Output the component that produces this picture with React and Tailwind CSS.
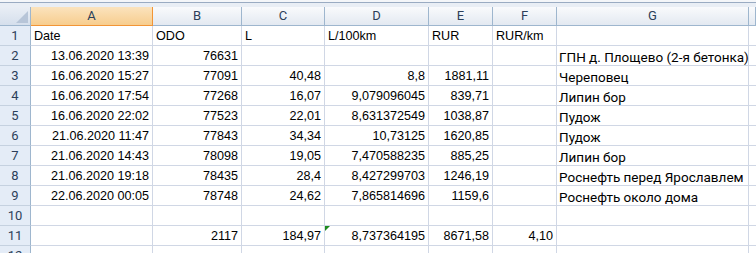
import React from "react";

const COLS = [
  { w: "w-[122px]", letter: "A" },
  { w: "w-[89px]", letter: "B" },
  { w: "w-[83px]", letter: "C" },
  { w: "w-[104px]", letter: "D" },
  { w: "w-[64px]", letter: "E" },
  { w: "w-[64px]", letter: "F" },
  { w: "w-[192px]", letter: "G" },
  { w: "flex-1", letter: "" },
];

const ROWS = [
  [["Date", "l"], ["ODO", "l"], ["L", "l"], ["L/100km", "l"], ["RUR", "l"], ["RUR/km", "l"], ["", "l"]],
  [["13.06.2020 13:39", "r"], ["76631", "r"], ["", "r"], ["", "r"], ["", "r"], ["", "r"], ["ГПН д. Площево (2-я бетонка)", "g"]],
  [["16.06.2020 15:27", "r"], ["77091", "r"], ["40,48", "r"], ["8,8", "r"], ["1881,11", "r"], ["", "r"], ["Череповец", "g"]],
  [["16.06.2020 17:54", "r"], ["77268", "r"], ["16,07", "r"], ["9,079096045", "r"], ["839,71", "r"], ["", "r"], ["Липин бор", "g"]],
  [["16.06.2020 22:02", "r"], ["77523", "r"], ["22,01", "r"], ["8,631372549", "r"], ["1038,87", "r"], ["", "r"], ["Пудож", "g"]],
  [["21.06.2020 11:47", "r"], ["77843", "r"], ["34,34", "r"], ["10,73125", "r"], ["1620,85", "r"], ["", "r"], ["Пудож", "g"]],
  [["21.06.2020 14:43", "r"], ["78098", "r"], ["19,05", "r"], ["7,470588235", "r"], ["885,25", "r"], ["", "r"], ["Липин бор", "g"]],
  [["21.06.2020 19:18", "r"], ["78435", "r"], ["28,4", "r"], ["8,427299703", "r"], ["1246,19", "r"], ["", "r"], ["Роснефть перед Ярославлем", "g"]],
  [["22.06.2020 00:05", "r"], ["78748", "r"], ["24,62", "r"], ["7,865814696", "r"], ["1159,6", "r"], ["", "r"], ["Роснефть около дома", "g"]],
  [["", "r"], ["", "r"], ["", "r"], ["", "r"], ["", "r"], ["", "r"], ["", "g"]],
  [["", "r"], ["2117", "r"], ["184,97", "r"], ["8,737364195", "r", true], ["8671,58", "r"], ["4,10", "r"], ["", "g"]],
  [["", "r"], ["", "r"], ["", "r"], ["", "r"], ["", "r"], ["", "r"], ["", "g"]],
];

function Cell({ w, text, kind, flag }) {
  const base =
    "relative shrink-0 h-full border-r border-b border-[#d0d7e5] flex items-end overflow-visible whitespace-nowrap text-black";
  if (kind === "g") {
    return (
      <div className={`${base} ${w} px-[2px] pb-[1px] font-['Roboto',sans-serif] text-[13.5px] leading-none`}>
        {text}
      </div>
    );
  }
  return (
    <div
      className={`${base} ${w} px-[3px] pb-[2px] font-['Liberation_Sans',Arial,sans-serif] text-[12.6px] leading-none ${
        kind === "r" ? "justify-end" : "justify-start"
      }`}
    >
      {flag && (
        <span className="absolute left-0 top-0 w-0 h-0 border-t-[5px] border-r-[5px] border-t-[#1e8a1e] border-r-transparent" />
      )}
      {text}
    </div>
  );
}

export default function App() {
  return (
    <div className="w-[756px] h-[253px] overflow-hidden bg-white relative">
      {/* top strip (formula bar bottom) */}
      <div className="h-[2px] bg-[#f4f6f9]" />
      <div className="h-[1px] bg-[#9aabc2]" />
      <div className="h-[4px] bg-[#e9eef5]" />

      {/* column headers */}
      <div className="flex h-[19px] font-['Roboto',sans-serif] text-[13px]">
        <div className="w-[31px] shrink-0 h-full border-r border-b border-[#9eb6ce] bg-gradient-to-b from-[#e9eef5] to-[#d5dfec] relative">
          <span className="absolute right-[2px] bottom-[2px] w-0 h-0 border-b-[12px] border-l-[12px] border-b-[#b7c5d8] border-l-transparent" />
        </div>
        {COLS.map((c, i) =>
          i === 0 ? (
            <div
              key={i}
              className={`${c.w} shrink-0 h-full border-r border-b border-r-[#f29536] border-b-[#f29536] bg-gradient-to-b from-[#fbe3bd] to-[#f7cd8e] flex items-center justify-center text-[#2c3f5a]`}
            >
              {c.letter}
            </div>
          ) : (
            <div
              key={i}
              className={`${c.w} shrink-0 h-full border-r border-b border-[#9eb6ce] bg-gradient-to-b from-[#f9fafc] to-[#e3e9f1] flex items-center justify-center text-[#2c3f5a]`}
            >
              {c.letter}
            </div>
          )
        )}
      </div>

      {/* rows */}
      {ROWS.map((row, r) => (
        <div key={r} className="flex h-[20px]">
          <div className="w-[31px] shrink-0 h-full border-r border-r-[#9eb6ce] border-b border-b-[#c5d1e0] bg-[#e4ecf7] flex items-center justify-center font-['Roboto',sans-serif] text-[13px] text-[#2c3f5a]">
            {r + 1}
          </div>
          {row.map((cell, c) => (
            <Cell key={c} w={COLS[c].w} text={cell[0]} kind={cell[1]} flag={cell[2]} />
          ))}
          <div className="flex-1 h-full border-b border-[#d0d7e5]" />
        </div>
      ))}
    </div>
  );
}
